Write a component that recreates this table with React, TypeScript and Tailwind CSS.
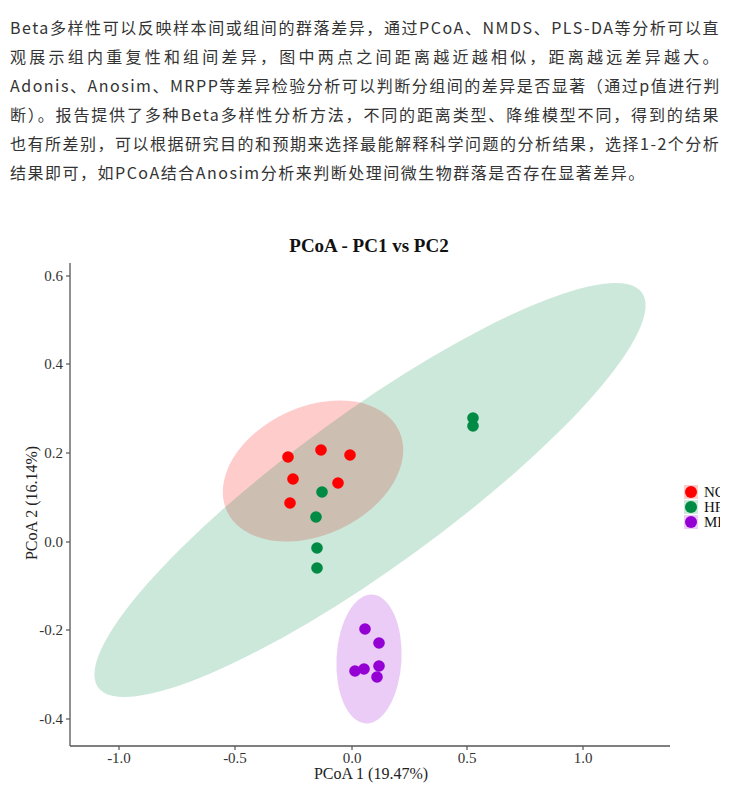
const lines = [
  "Beta多样性可以反映样本间或组间的群落差异，通过PCoA、NMDS、PLS-DA等分析可以直",
  "观展示组内重复性和组间差异，图中两点之间距离越近越相似，距离越远差异越大。",
  "Adonis、Anosim、MRPP等差异检验分析可以判断分组间的差异是否显著（通过p值进行判",
  "断）。报告提供了多种Beta多样性分析方法，不同的距离类型、降维模型不同，得到的结果",
  "也有所差别，可以根据研究目的和预期来选择最能解释科学问题的分析结果，选择1-2个分析",
  "结果即可，如PCoA结合Anosim分析来判断处理间微生物群落是否存在显著差异。",
];

type Pt = [number, number];

const RED = "#ff0000";
const GREEN = "#008b45";
const PURPLE = "#9400d3";

const redPts: Pt[] = [
  [288, 457],
  [321, 450],
  [350, 455],
  [293, 479],
  [338, 483],
  [290, 503],
];

const greenPts: Pt[] = [
  [322, 492],
  [316, 517],
  [317, 548],
  [317, 568],
  [473, 418],
  [473, 426],
];

const purplePts: Pt[] = [
  [365, 629],
  [379, 643],
  [355, 671],
  [364, 669],
  [379, 666],
  [377, 677],
];

// y ticks: value -> pixel
const yTicks = [
  { label: "0.6", y: 276 },
  { label: "0.4", y: 364 },
  { label: "0.2", y: 453 },
  { label: "0.0", y: 542 },
  { label: "-0.2", y: 630 },
  { label: "-0.4", y: 719 },
];

const xTicks = [
  { label: "-1.0", x: 119 },
  { label: "-0.5", x: 235 },
  { label: "0.0", x: 352 },
  { label: "0.5", x: 467 },
  { label: "1.0", x: 583 },
];

const legend = [
  { name: "NC", color: RED, bg: "#ffcccc", y: 492 },
  { name: "HF", color: GREEN, bg: "#cce8da", y: 507 },
  { name: "ME", color: PURPLE, bg: "#eaccf6", y: 522 },
];

function PcoaChart() {
  const serif = "'Liberation Serif', 'Times New Roman', serif";
  // the chart image is cut at x=720 in the source, so the legend labels lose their right half
  return (
    <svg
      className="block mt-[13px] overflow-hidden"
      width={720}
      height={596}
      viewBox="0 200 720 596"
      fontFamily={serif}
    >
      <text x={369} y={252} textAnchor="middle" fontSize={19} fontWeight={700} fill="#111">
        PCoA - PC1 vs PC2
      </text>

      {/* group ellipses */}
      <ellipse cx={313} cy={471} rx={95} ry={64} transform="rotate(-25 313 471)" fill={RED} fillOpacity={0.2} />
      <ellipse cx={370} cy={490} rx={336} ry={77} transform="rotate(-36 370 490)" fill={GREEN} fillOpacity={0.2} />
      <ellipse cx={369} cy={659} rx={32.5} ry={64.5} transform="rotate(3 369 659)" fill={PURPLE} fillOpacity={0.2} />

      {redPts.map(([x, y], i) => (
        <circle key={"r" + i} cx={x} cy={y} r={5.8} fill={RED} />
      ))}
      {greenPts.map(([x, y], i) => (
        <circle key={"g" + i} cx={x} cy={y} r={5.8} fill={GREEN} />
      ))}
      {purplePts.map(([x, y], i) => (
        <circle key={"p" + i} cx={x} cy={y} r={5.8} fill={PURPLE} />
      ))}

      {/* axes */}
      <line x1={70} y1={263} x2={70} y2={746} stroke="#555" strokeWidth={1.3} />
      <line x1={70} y1={746} x2={670} y2={746} stroke="#555" strokeWidth={1.3} />

      {yTicks.map((t) => (
        <g key={t.label}>
          <line x1={66} y1={t.y} x2={70} y2={t.y} stroke="#555" strokeWidth={1.2} />
          <text x={63} y={t.y + 5} textAnchor="end" fontSize={15} fill="#333">
            {t.label}
          </text>
        </g>
      ))}

      {xTicks.map((t) => (
        <g key={t.label}>
          <line x1={t.x} y1={746} x2={t.x} y2={750} stroke="#555" strokeWidth={1.2} />
          <text x={t.x} y={763} textAnchor="middle" fontSize={15} fill="#333">
            {t.label}
          </text>
        </g>
      ))}

      <text x={371} y={779} textAnchor="middle" fontSize={16} fill="#222">
        PCoA 1 (19.47%)
      </text>
      <text
        x={0}
        y={0}
        transform="translate(37 503) rotate(-90)"
        textAnchor="middle"
        fontSize={16}
        fill="#222"
      >
        PCoA 2 (16.14%)
      </text>

      {legend.map((l) => (
        <g key={l.name}>
          <rect x={684} y={l.y - 7} width={14} height={14} fill={l.bg} />
          <circle cx={691} cy={l.y} r={6} fill={l.color} />
          <text x={704} y={l.y + 5} fontSize={15} fill="#111">
            {l.name}
          </text>
        </g>
      ))}
    </svg>
  );
}

export default function App() {
  return (
    <div className="w-[730px] h-[796px] overflow-hidden bg-white">
      <div
        className="pt-[13px] pl-[10px] pr-[10px] text-[16px] tracking-[1.5px] text-[#333]"
        style={{ fontFamily: "'Noto Sans CJK SC', 'Noto Sans', sans-serif" }}
      >
        {lines.map((line, i) => (
          <div
            key={i}
            className={
              i < lines.length - 1
                ? "h-[29px] leading-[29px] whitespace-nowrap text-justify [text-align-last:justify]"
                : "h-[29px] leading-[29px] whitespace-nowrap"
            }
          >
            {line}
          </div>
        ))}
      </div>
      <PcoaChart />
    </div>
  );
}
